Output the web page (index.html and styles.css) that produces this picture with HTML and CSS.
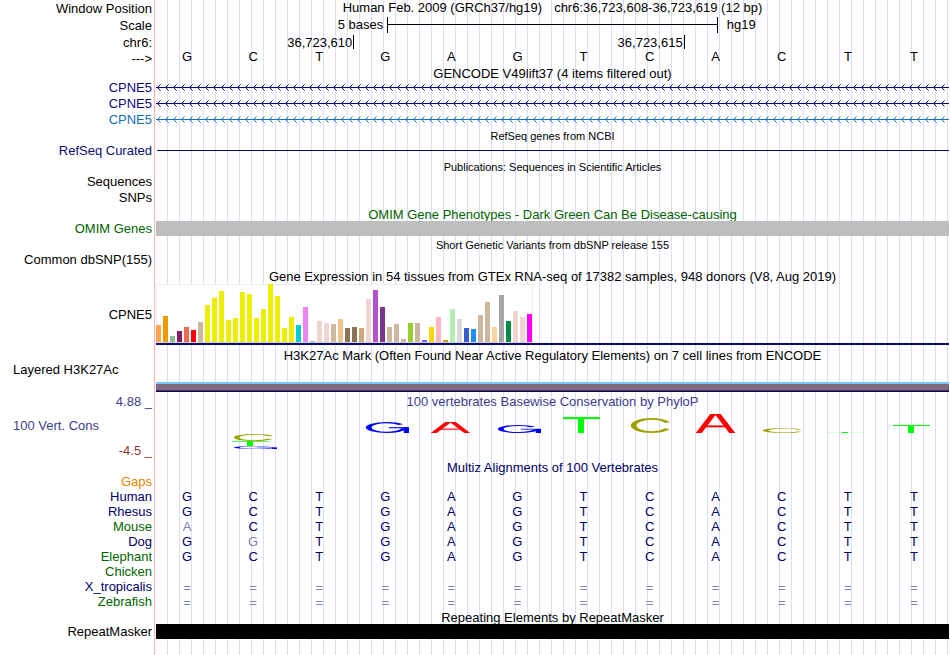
FILE: index.html
```html
<!DOCTYPE html>
<html lang="en">
<head>
<meta charset="utf-8">
<title>Genome Browser - hg19 chr6:36,723,608-36,723,619</title>
<link rel="stylesheet" href="styles.css">
</head>
<body>
<svg class="defs" aria-hidden="true">
  <defs>
    <pattern id="strand-navy" width="8" height="16" patternUnits="userSpaceOnUse">
      <polyline points="4.5,4.5 1.5,7.5 4.5,10.5" fill="none" stroke="#0c0c78" stroke-width="1"/>
      <rect x="0" y="7" width="8" height="1" fill="#0c0c78"/>
    </pattern>
    <pattern id="strand-blue" width="8" height="16" patternUnits="userSpaceOnUse">
      <polyline points="4.5,4.5 1.5,7.5 4.5,10.5" fill="none" stroke="#1470b4" stroke-width="1"/>
      <rect x="0" y="7" width="8" height="1" fill="#1470b4"/>
    </pattern>
    <symbol id="base-a" viewBox="0 0 48 100" preserveAspectRatio="none">
      <line x1="6" y1="105" x2="22" y2="-5" stroke="#f00" stroke-width="6"/>
      <line x1="41" y1="105" x2="25" y2="-5" stroke="#f00" stroke-width="6"/>
      <rect x="12" y="60" width="24" height="10" fill="#f00"/>
    </symbol>
    <symbol id="base-c" viewBox="0 0 48 100" preserveAspectRatio="none">
      <g transform="scale(.48 1)">
        <ellipse cx="53" cy="50" rx="37" ry="44" fill="none" stroke="#a0a000" stroke-width="12" pathLength="360" stroke-dasharray="300 60" stroke-dashoffset="-30"/>
      </g>
    </symbol>
    <symbol id="base-g" viewBox="0 0 48 100" preserveAspectRatio="none">
      <g transform="scale(.48 1)">
        <ellipse cx="53" cy="50" rx="37" ry="44" fill="none" stroke="#00f" stroke-width="12" pathLength="360" stroke-dasharray="310 50" stroke-dashoffset="-10"/>
        <rect x="58" y="47" width="42" height="10" fill="#00f"/>
        <rect x="89" y="50" width="11" height="50" fill="#00f"/>
      </g>
    </symbol>
    <symbol id="base-t" viewBox="0 0 48 100" preserveAspectRatio="none">
      <rect x="3" y="0" width="37" height="13" fill="#0f0"/>
      <rect x="18" y="0" width="6" height="100" fill="#0f0"/>
    </symbol>
  </defs>
</svg>

<main class="browser">
  <header class="row ruler">
    <div class="label">Window Position</div>
    <h1 class="title position"><span>Human Feb. 2009 (GRCh37/hg19)</span><span>chr6:36,723,608-36,723,619 (12 bp)</span></h1>
  </header>
  <div class="row ruler">
    <div class="label">Scale</div>
    <div class="track scale"><span class="scale-size">5 bases</span><span class="scale-bar"></span><span class="scale-db">hg19</span></div>
  </div>
  <div class="row ruler">
    <div class="label">chr6:</div>
    <div class="track ticks"><span class="tick">36,723,610</span><span class="tick">36,723,615</span></div>
  </div>
  <div class="row sequence">
    <div class="label">---&gt;</div>
    <div class="bases"><span>G</span><span>C</span><span>T</span><span>G</span><span>A</span><span>G</span><span>T</span><span>C</span><span>A</span><span>C</span><span>T</span><span>T</span></div>
  </div>

  <div class="row tight"><h2 class="title">GENCODE V49lift37 (4 items filtered out)</h2></div>
  <div class="row item navy"><div class="label">CPNE5</div><svg class="track gene" role="img" aria-label="CPNE5, reverse strand"><rect width="100%" height="16" fill="url(#strand-navy)"/></svg></div>
  <div class="row item navy"><div class="label">CPNE5</div><svg class="track gene" role="img" aria-label="CPNE5, reverse strand"><rect width="100%" height="16" fill="url(#strand-navy)"/></svg></div>
  <div class="row item blue"><div class="label">CPNE5</div><svg class="track gene" role="img" aria-label="CPNE5, reverse strand"><rect width="100%" height="16" fill="url(#strand-blue)"/></svg></div>

  <div class="row low-title"><h2 class="title small">RefSeq genes from NCBI</h2></div>
  <div class="row item navy"><div class="label">RefSeq Curated</div><div class="track"><div class="thin-line"></div></div></div>

  <div class="row low-title"><h2 class="title small">Publications: Sequences in Scientific Articles</h2></div>
  <div class="row item"><div class="label">Sequences</div></div>
  <div class="row item"><div class="label">SNPs</div></div>

  <div class="row low-title"><h2 class="title green">OMIM Gene Phenotypes - Dark Green Can Be Disease-causing</h2></div>
  <div class="row"><div class="label green">OMIM Genes</div><div class="track"><div class="block grey"></div></div></div>

  <div class="row item low-title"><h2 class="title small">Short Genetic Variants from dbSNP release 155</h2></div>
  <div class="row item"><div class="label">Common dbSNP(155)</div></div>

  <div class="row item low-title"><h2 class="title">Gene Expression in 54 tissues from GTEx RNA-seq of 17382 samples, 948 donors (V8, Aug 2019)</h2></div>
  <div class="row gtex">
    <div class="label">CPNE5</div>
    <div class="track expression">
      <div class="chart">
        <i style="height:17px;background:#ffa54f"></i><i style="height:26px;background:#ee9a00"></i><i style="height:6px;background:#8fbc8f"></i><i style="height:11px;background:#8b1c62"></i><i style="height:15px;background:#ee6a50"></i><i style="height:12px;background:#ff0000"></i><i style="height:20px;background:#cdb79e"></i>
        <i style="height:37px;background:#eeee00"></i><i style="height:44px;background:#eeee00"></i><i style="height:51px;background:#eeee00"></i><i style="height:22px;background:#eeee00"></i><i style="height:24px;background:#eeee00"></i><i style="height:50px;background:#eeee00"></i><i style="height:48px;background:#eeee00"></i><i style="height:24px;background:#eeee00"></i><i style="height:33px;background:#eeee00"></i><i style="height:58px;background:#eeee00"></i><i style="height:46px;background:#eeee00"></i><i style="height:14px;background:#eeee00"></i><i style="height:25px;background:#eeee00"></i>
        <i style="height:17px;background:#00cdcd"></i><i style="height:35px;background:#ee82ee"></i><i style="height:1px;background:#9ac0cd"></i><i style="height:21px;background:#eed5d2"></i><i style="height:19px;background:#eed5d2"></i><i style="height:18px;background:#cdb79e"></i><i style="height:23px;background:#eec591"></i><i style="height:14px;background:#8b7355"></i><i style="height:15px;background:#8b7355"></i><i style="height:14px;background:#cdaa7d"></i>
        <i style="height:43px;background:#eed5d2"></i><i style="height:52px;background:#b452cd"></i><i style="height:35px;background:#7a378b"></i><i style="height:15px;background:#cdb79e"></i><i style="height:18px;background:#cdb79e"></i><i style="height:3px;background:#cdb79e"></i><i style="height:19px;background:#9acd32"></i><i style="height:19px;background:#cdb79e"></i><i style="height:2px;background:#7a67ee"></i><i style="height:15px;background:#ffd700"></i>
        <i style="height:25px;background:#ffb6c1"></i><i style="height:2px;background:#cd9b1d"></i><i style="height:33px;background:#b4eeb4"></i><i style="height:23px;background:#d9d9d9"></i><i style="height:14px;background:#3a5fcd"></i><i style="height:13px;background:#1e90ff"></i><i style="height:27px;background:#cdb79e"></i><i style="height:40px;background:#cdb79e"></i><i style="height:15px;background:#ffd39b"></i><i style="height:47px;background:#a6a6a6"></i><i style="height:21px;background:#008b45"></i><i style="height:31px;background:#eed5d2"></i><i style="height:25px;background:#eed5d2"></i><i style="height:28px;background:#ff00ff"></i>
      </div>
    </div>
  </div>

  <div class="row"><h2 class="title">H3K27Ac Mark (Often Found Near Active Regulatory Elements) on 7 cell lines from ENCODE</h2></div>
  <div class="row layered">
    <div class="label left">Layered H3K27Ac</div>
    <div class="track signal"><div class="band sky"></div><div class="band mauve"></div><div class="band indigo"></div><div class="band night"></div></div>
  </div>

  <div class="row"><div class="label cons">4.88 _</div><h2 class="title cons">100 vertebrates Basewise Conservation by PhyloP</h2></div>
  <div class="row phylop">
    <div class="label limits"><span class="cons name">100 Vert. Cons</span><span class="low">-4.5 _</span></div>
    <div class="bases logo">
      <div></div>
      <div class="below">
        <svg style="height:7px"><use href="#base-c"/></svg>
        <svg style="height:5px"><use href="#base-t"/></svg>
        <svg style="height:3px"><use href="#base-g"/></svg>
      </div>
      <div></div>
      <div><svg style="height:11px"><use href="#base-g"/></svg></div>
      <div><svg style="height:11px"><use href="#base-a"/></svg></div>
      <div><svg style="height:8px"><use href="#base-g"/></svg></div>
      <div><svg style="height:16px"><use href="#base-t"/></svg></div>
      <div><svg style="height:15px"><use href="#base-c"/></svg></div>
      <div><svg style="height:19px"><use href="#base-a"/></svg></div>
      <div><svg style="height:5px"><use href="#base-c"/></svg></div>
      <div><svg style="height:1px"><use href="#base-t"/></svg></div>
      <div><svg style="height:8px"><use href="#base-t"/></svg></div>
    </div>
  </div>

  <div class="row tight"><h2 class="title ink" id="multiz">Multiz Alignments of 100 Vertebrates</h2></div>
  <table class="multiz" aria-labelledby="multiz">
    <tr><th class="gaps">Gaps</th><td></td><td></td><td></td><td></td><td></td><td></td><td></td><td></td><td></td><td></td><td></td><td></td></tr>
    <tr><th>Human</th><td>G</td><td>C</td><td>T</td><td>G</td><td>A</td><td>G</td><td>T</td><td>C</td><td>A</td><td>C</td><td>T</td><td>T</td></tr>
    <tr><th>Rhesus</th><td>G</td><td>C</td><td>T</td><td>G</td><td>A</td><td>G</td><td>T</td><td>C</td><td>A</td><td>C</td><td>T</td><td>T</td></tr>
    <tr><th class="green">Mouse</th><td class="pale">A</td><td>C</td><td>T</td><td>G</td><td>A</td><td>G</td><td>T</td><td>C</td><td>A</td><td>C</td><td>T</td><td>T</td></tr>
    <tr><th>Dog</th><td>G</td><td class="pale">G</td><td>T</td><td>G</td><td>A</td><td>G</td><td>T</td><td>C</td><td>A</td><td>C</td><td>T</td><td>T</td></tr>
    <tr><th class="green">Elephant</th><td>G</td><td>C</td><td>T</td><td>G</td><td>A</td><td>G</td><td>T</td><td>C</td><td>A</td><td>C</td><td>T</td><td>T</td></tr>
    <tr><th class="green">Chicken</th><td></td><td></td><td></td><td></td><td></td><td></td><td></td><td></td><td></td><td></td><td></td><td></td></tr>
    <tr class="unaligned"><th>X_tropicalis</th><td>=</td><td>=</td><td>=</td><td>=</td><td>=</td><td>=</td><td>=</td><td>=</td><td>=</td><td>=</td><td>=</td><td>=</td></tr>
    <tr class="unaligned"><th class="green">Zebrafish</th><td>=</td><td>=</td><td>=</td><td>=</td><td>=</td><td>=</td><td>=</td><td>=</td><td>=</td><td>=</td><td>=</td><td>=</td></tr>
  </table>

  <div class="row low-title"><h2 class="title">Repeating Elements by RepeatMasker</h2></div>
  <div class="row"><div class="label">RepeatMasker</div><div class="track"><div class="block black"></div></div></div>
</main>
</body>
</html>
```
FILE: styles.css
```css
* {
  box-sizing: border-box;
}

body {
  margin: 0;
  background: #fff;
  color: #000;
  font-family: "Liberation Sans", Arial, Helvetica, sans-serif;
  font-size: 13px;
  line-height: 15px;
}

.defs {
  display: block;
  width: 0;
  height: 0;
}

/* Guide lines run behind every track, with the red divider after the labels. */
.browser {
  min-height: 100vh;
  padding-right: 1px;
  background:
    linear-gradient(#ffb4b4, #ffb4b4) 154px 0 / 1px 100% no-repeat,
    repeating-linear-gradient(to right, transparent 0 11px, #dcdcff 11px 12px) 156px 0 / calc(100% - 157px) 100% no-repeat;
}

.row {
  display: grid;
  grid-template-columns: 152px minmax(0, 1fr);
  column-gap: 4px;
  min-height: 15px;
}

.label {
  grid-column: 1;
  text-align: right;
  white-space: nowrap;
}

.label.left {
  padding-left: 13px;
  line-height: 13px;
  text-align: left;
}

.track,
.title {
  grid-column: 2;
  width: 100%;
}

.title {
  margin: 0;
  font-size: 13px;
  font-weight: normal;
  text-align: center;
  white-space: nowrap;
}

.title.small {
  font-size: 11px;
}

.tight {
  height: 14px;
  min-height: 14px;
}

.item {
  min-height: 16px;
  line-height: 16px;
}

/* Titles that sit close to the feature below them */
.low-title {
  height: 15px;
  line-height: 17px;
}

.low-title.item {
  height: 16px;
  line-height: 18px;
}

.navy { color: #0c0c78; }
.blue { color: #1470b4; }
.green { color: #006400; }
.cons { color: #3c3c8c; }
.ink { color: #000064; }
.low { color: #8c3c3c; }

/* Ruler */
.ruler {
  min-height: 17px;
  line-height: 17px;
}

.position {
  display: flex;
  justify-content: center;
  gap: 12px;
  line-height: 15px;
}

.scale {
  display: grid;
  grid-template-columns: 7fr 10fr 7fr;
  line-height: 15px;
}

.scale-size {
  padding-right: 4px;
  text-align: right;
}

.scale-bar {
  height: 16px;
  border: solid #000;
  border-width: 0 1px;
  background: linear-gradient(#000, #000) 0 7px / 100% 1px no-repeat;
}

.scale-db {
  padding-left: 9px;
}

.ticks {
  display: grid;
  grid-template-columns: 3fr 5fr 4fr;
}

.tick {
  height: 14px;
  margin-top: 1px;
  padding-right: 1px;
  border-right: 1px solid #000;
  line-height: 15px;
  text-align: right;
}

/* One equal cell per base */
.bases {
  display: grid;
  grid-template-columns: repeat(12, minmax(0, 1fr));
  grid-column: 2;
  margin-left: -2px;
  margin-right: 2px;
  text-align: center;
}

.sequence .bases {
  line-height: 12px;
}

/* Features */
.gene {
  display: block;
  height: 16px;
}

.thin-line {
  height: 1px;
  margin: 7px 0 0 1px;
  background: #0c0c78;
}

.block {
  height: 15px;
}

.grey { background: #bebebe; }
.black { background: #000; }

/* GTEx */
.gtex {
  height: 64px;
}

.gtex .label {
  line-height: 62px;
}

.expression {
  align-self: start;
  border-bottom: 2px solid #0c0c78;
}

.chart {
  display: flex;
  align-items: flex-end;
  gap: 2px;
  width: fit-content;
  height: 59px;
  padding-right: 1px;
  border-bottom: 1px solid #d2d2d2;
  background: #fff;
  box-shadow: inset 0 1px #eee, inset -1px 0 #eee, inset 1px 0 #eee;
}

.chart i {
  width: 5px;
}

/* H3K27Ac */
.layered {
  height: 29px;
  margin-bottom: 2px;
}

.signal {
  align-self: end;
}

.band { height: 1px; }
.band.sky { height: 2px; background: #78c8ff; }
.band.mauve { height: 6px; background: #82697d; }
.band.indigo { background: #372d78; }
.band.night { background: #140f32; }

/* PhyloP */
.phylop {
  height: 51px;
}

.limits {
  display: flex;
  flex-direction: column;
  gap: 10px;
  padding-top: 9px;
}

.limits .name {
  padding-left: 13px;
  text-align: left;
}

.logo > div {
  display: flex;
  flex-direction: column;
  justify-content: flex-end;
  align-items: center;
  height: 24px;
}

.logo > .below {
  justify-content: flex-start;
  height: auto;
  padding-top: 25px;
}

.logo svg {
  display: block;
  flex: none;
  width: 48px;
}

/* Multiz */
.multiz {
  width: calc(100% - 2px);
  border-collapse: collapse;
  table-layout: fixed;
  color: #000064;
}

.multiz th,
.multiz td {
  height: 15px;
  padding: 0;
  font-weight: normal;
  text-align: center;
}

.multiz th {
  width: 154px;
  padding-right: 2px;
  text-align: right;
}

.multiz .green { color: #006400; }
.multiz .gaps { color: #e68200; }
.multiz .pale { color: #8282b4; }

.multiz .unaligned td {
  padding-top: 2px;
  color: #8282b4;
  line-height: 13px;
}
```
